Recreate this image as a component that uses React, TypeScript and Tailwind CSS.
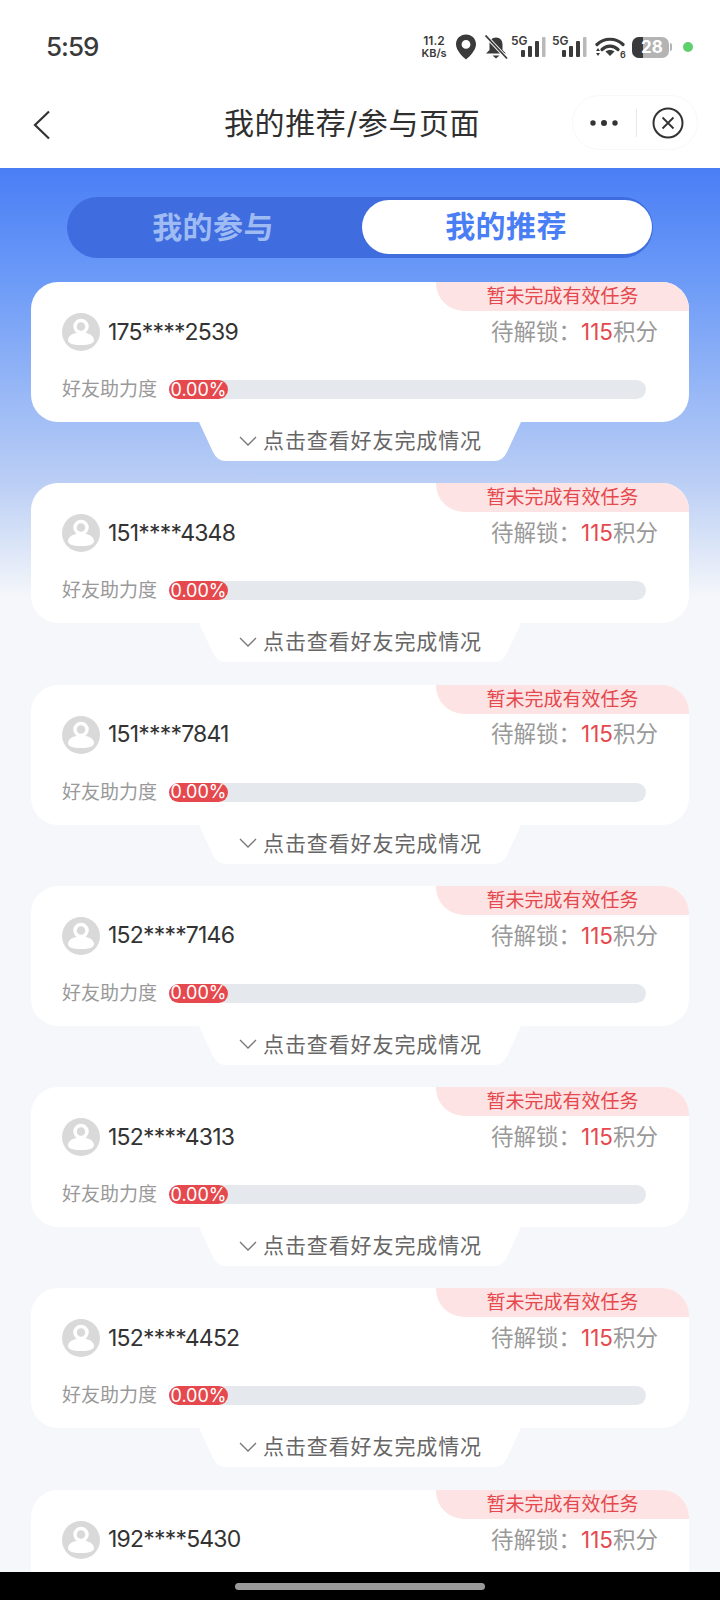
const FONT = "font-['Inter','Noto_Sans_CJK_SC',sans-serif]";

const phones = [
  "175****2539",
  "151****4348",
  "151****7841",
  "152****7146",
  "152****4313",
  "152****4452",
  "192****5430",
];

function SignalIcon() {
  return (
    <div className="relative h-[24px] w-[36px]">
      <span className="absolute left-0 top-0 text-[12px] font-semibold leading-[12px] text-[#3a3a3a]">5G</span>
      <svg className="absolute left-0 top-0" width="36" height="24" viewBox="0 0 36 24">
        <rect x="10" y="15" width="4" height="7" rx="1" fill="#3a3a3a" />
        <rect x="17" y="11" width="4" height="11" rx="1" fill="#3a3a3a" />
        <rect x="24" y="6" width="4" height="16" rx="1" fill="#3a3a3a" />
        <rect x="31" y="2" width="3.5" height="20" rx="1" fill="#b9b9b9" />
      </svg>
    </div>
  );
}

function StatusBar() {
  return (
    <div className="flex h-[72px] items-center justify-between pl-[46px] pr-[27px] pt-[23px] pb-[1px]">
      <span className="text-[26px] font-medium leading-none tracking-[-1px] text-[#3a3a3a]">5:59</span>
      <div className="flex items-center">
        <div className="mr-[7px] flex w-[28px] flex-col items-center text-[12px] font-semibold leading-[13px] text-[#3a3a3a]">
          <span>11.2</span>
          <span className="text-[11px]">KB/s</span>
        </div>
        <svg width="22" height="26" viewBox="0 0 22 26" className="mr-[7px]">
          <path fillRule="evenodd" d="M11 0.5C5.2 0.5 1 4.8 1 10.2c0 6.2 6.8 12.6 10 15.3 3.2-2.7 10-9.1 10-15.3C21 4.8 16.8 0.5 11 0.5zM11 6a4.4 4.4 0 1 1 0 8.800A4.4 4.4 0 0 1 11 6z" fill="#3a3a3a" />
        </svg>
        <svg width="24" height="25" viewBox="0 0 24 25" className="mr-[3px]">
          <path d="M12 2.500c-4.200 0-6.500 3-6.500 7V15L2 18.500h20L18.500 15V9.500c0-4-2.300-7-6.500-7z" fill="#3a3a3a" />
          <path d="M8.500 20.500h7l-3.500 3z" fill="#3a3a3a" />
          <path d="M1.500 0.500L23 23.500" stroke="#fff" strokeWidth="3.500" />
          <path d="M1.500 0.500L23 23.500" stroke="#3a3a3a" strokeWidth="1.800" />
        </svg>
        <SignalIcon />
        <div className="ml-[5px]">
          <SignalIcon />
        </div>
        <svg width="31" height="24" viewBox="0 0 31 24" className="ml-[7px]">
          <path d="M2 9.500C9 2.500 21 2.500 28 9.500" fill="none" stroke="#3a3a3a" strokeWidth="3.200" strokeLinecap="round" />
          <path d="M7 14.500C11.500 10 18.500 10 23 14.500" fill="none" stroke="#3a3a3a" strokeWidth="3.200" strokeLinecap="round" />
          <path d="M15 21l-4.500-4.500c2.500-2 6.500-2 9 0z" fill="#3a3a3a" />
          <path d="M1 16l2-3 2 3zM1 18l2 3 2-3z" fill="#3a3a3a" />
          <text x="25" y="23" fontSize="9" fontWeight="600" fill="#3a3a3a">6</text>
        </svg>
        <div className="ml-[6px] flex items-center">
          <div className="relative flex h-[21px] w-[37px] items-center justify-center overflow-hidden rounded-[7px] bg-[#b4b4b4]">
            <div className="absolute bottom-0 left-0 top-0 w-[11px] bg-[#3a3a3a]" />
            <span className="relative pl-[3px] text-[17px] font-bold leading-none text-white">28</span>
          </div>
          <div className="ml-[1px] h-[8px] w-[2px] rounded-r-[2px] bg-[#b4b4b4]" />
        </div>
        <div className="ml-[11px] h-[10px] w-[10px] rounded-full bg-[#5dcf6c]" />
      </div>
    </div>
  );
}

function NavBar() {
  return (
    <div className="relative flex h-[96px] items-center justify-between pl-[33px] pr-[22px]">
      <svg width="18" height="30" viewBox="0 0 18 30" className="mt-[10px]">
        <path d="M16 1.500L2 15l14 13.500" fill="none" stroke="#333" strokeWidth="2.200" />
      </svg>
      <span className="absolute left-[224px] top-[31px] text-[30px] leading-[40px] tracking-[0.6px] text-[#2f2f2f]">我的推荐/参与页面</span>
      <div className="mt-[5px] flex h-[55px] w-[126px] items-center rounded-full border border-[#f8f8f8] bg-white pl-[16px]">
        <svg width="30" height="8" viewBox="0 0 30 8">
          <circle cx="4" cy="4" r="2.700" fill="#333" />
          <circle cx="15" cy="4" r="3" fill="#333" />
          <circle cx="26" cy="4" r="2.700" fill="#333" />
        </svg>
        <div className="ml-[17px] h-[28px] w-px bg-[#e8e8e8]" />
        <svg width="32" height="32" viewBox="0 0 32 32" className="ml-[15px]">
          <circle cx="16" cy="16" r="14.500" fill="none" stroke="#333" strokeWidth="2" />
          <path d="M10.500 10.500l11 11M21.500 10.500l-11 11" stroke="#333" strokeWidth="1.800" />
        </svg>
      </div>
    </div>
  );
}

function Tabs() {
  return (
    <div className="mx-[67px] mt-[29px] flex h-[61px] items-center rounded-full bg-[#3f6de0] pr-[1px]">
      <div className="flex flex-1 justify-center pr-[3px] text-[30px] font-bold tracking-[0.4px] text-[#9fbbf3]">我的参与</div>
      <div className="mb-[2px] flex h-[54px] w-[290px] items-center justify-center rounded-full bg-white pr-[2px] text-[30px] font-bold tracking-[0.4px] text-[#4a7ef5]">
        我的推荐
      </div>
    </div>
  );
}

function Flap() {
  return (
    <div className="relative mx-auto flex h-[39px] w-[324px] items-center justify-center pb-[2px]">
      <svg className="absolute left-0 top-0" width="324" height="39" viewBox="0 0 324 39">
        <path d="M1 0H323L309 30Q305 39 296 39H28Q19 39 15 30Z" fill="#fff" />
      </svg>
      <svg width="18" height="10" viewBox="0 0 18 10" className="relative ml-[1px] mr-[6px]">
        <path d="M1 1l8 8 8-8" fill="none" stroke="#777" strokeWidth="1.300" />
      </svg>
      <span className="relative text-[21px] leading-none tracking-[0.9px] text-[#666]">点击查看好友完成情况</span>
    </div>
  );
}

function Card({ phone, cut }: { phone: string; cut?: boolean }) {
  return (
    <div>
      <div className="mx-[31px] h-[140px] rounded-[27px] bg-white">
        <div className="flex justify-end">
          <div className="flex h-[29px] w-[253px] items-center justify-center rounded-bl-[28px] rounded-tr-[27px] bg-[#fde3e3] text-[19px] leading-none text-[#e5484d]">
            暂未完成有效任务
          </div>
        </div>
        <div className="flex items-center justify-between pl-[31px] pr-[31px] pt-[2px]">
          <div className="flex items-center">
            <svg width="38" height="38" viewBox="0 0 38 38">
              <circle cx="19" cy="19" r="19" fill="#d9d9d9" />
              <circle cx="19" cy="13.500" r="6" fill="none" stroke="#fff" strokeWidth="3.500" />
              <path d="M6 27c0-4.500 5.500-7.500 13-7.500S32 22.500 32 27c0 3-4 5-13 5S6 30 6 27z" fill="#fff" />
            </svg>
            <span className="ml-[8px] text-[23px] leading-none tracking-[-0.8px] text-[#333]">{phone}</span>
          </div>
          <div className="text-[22.500px] leading-none text-[#999]">
            待解锁：<span className="text-[#e5484d]">115</span>积分
          </div>
        </div>
        {!cut && (
          <div className="mt-[29px] flex items-center pl-[31px] pr-[43px]">
            <span className="w-[107px] shrink-0 text-[19px] leading-none text-[#999]">好友助力度</span>
            <div className="h-[19px] flex-1 rounded-full bg-[#e5e8ed]">
              <div className="flex h-[19px] w-[59px] items-center justify-center rounded-full bg-[#e5484d] text-[18px] leading-none text-white">
                0.00%
              </div>
            </div>
          </div>
        )}
      </div>
      {!cut && <Flap />}
    </div>
  );
}

export default function App() {
  return (
    <div className={`${FONT} h-[1600px] w-[720px] overflow-hidden bg-white`}>
      <StatusBar />
      <NavBar />
      <div className="h-[1404px] overflow-hidden bg-[linear-gradient(180deg,#4a7ef5_0px,#6b9af7_110px,#bdd0f5_320px,#f5f7fa_430px)]">
        <Tabs />
        <div className="mt-[24px] flex flex-col gap-[22.300px]">
          {phones.map((phone, i) => (
            <Card key={phone} phone={phone} cut={i === phones.length - 1} />
          ))}
        </div>
      </div>
      <div className="flex h-[28px] items-start justify-center bg-black pt-[11px]">
        <div className="h-[7px] w-[250px] rounded-full bg-[#9a9a9a]" />
      </div>
    </div>
  );
}
